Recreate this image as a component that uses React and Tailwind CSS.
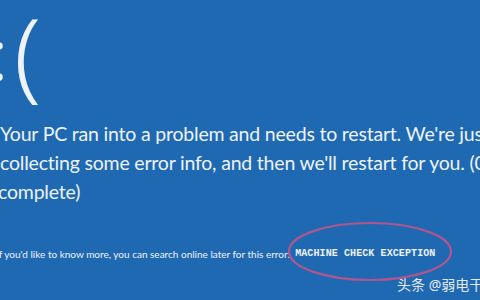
export default function App() {
  return (
    <div className="relative w-[480px] h-[300px] overflow-hidden bg-[#1f69b3] text-[#eef3fa] font-['Lato',sans-serif]">
      <div className="flex flex-col">
        <div className="h-[119px] flex items-start whitespace-nowrap font-['Noto_Sans',sans-serif] font-light">
          <span className="ml-[-9px] mt-[8px] text-[70px] leading-[90px]">:</span>
          <span className="ml-[6px] mt-[-8px] text-[98px] leading-[120px]">(</span>
        </div>
        <div className="text-[19.5px] leading-[29px] tracking-[-0.2px] whitespace-nowrap">
          <div>Your PC ran into a problem and needs to restart. We're just</div>
          <div>collecting some error info, and then we'll restart for you. (0%</div>
          <div className="ml-[-2px]">complete)</div>
        </div>
        <div className="mt-[41px] ml-[-4px] flex items-center gap-[5px] whitespace-nowrap text-[10px] leading-[14px]">
          <span>If you'd like to know more, you can search online later for this error:</span>
          <span className="font-['Liberation_Mono',monospace] font-bold text-[10px] tracking-[0.1px]">MACHINE CHECK EXCEPTION</span>
        </div>
      </div>
      <svg className="absolute left-[286px] top-[220px]" width="168" height="63" viewBox="0 0 168 63">
        <ellipse cx="84" cy="31.5" rx="81" ry="28.5" fill="none" stroke="#b0568e" strokeWidth="2.2" />
      </svg>
      <div className="absolute left-[397px] top-[275px] text-[14px] leading-[20px] text-[#e4e9f0] whitespace-nowrap font-['Noto_Sans','Noto_Sans_CJK_SC',sans-serif]">
        头条 @弱电干货
      </div>
    </div>
  );
}
